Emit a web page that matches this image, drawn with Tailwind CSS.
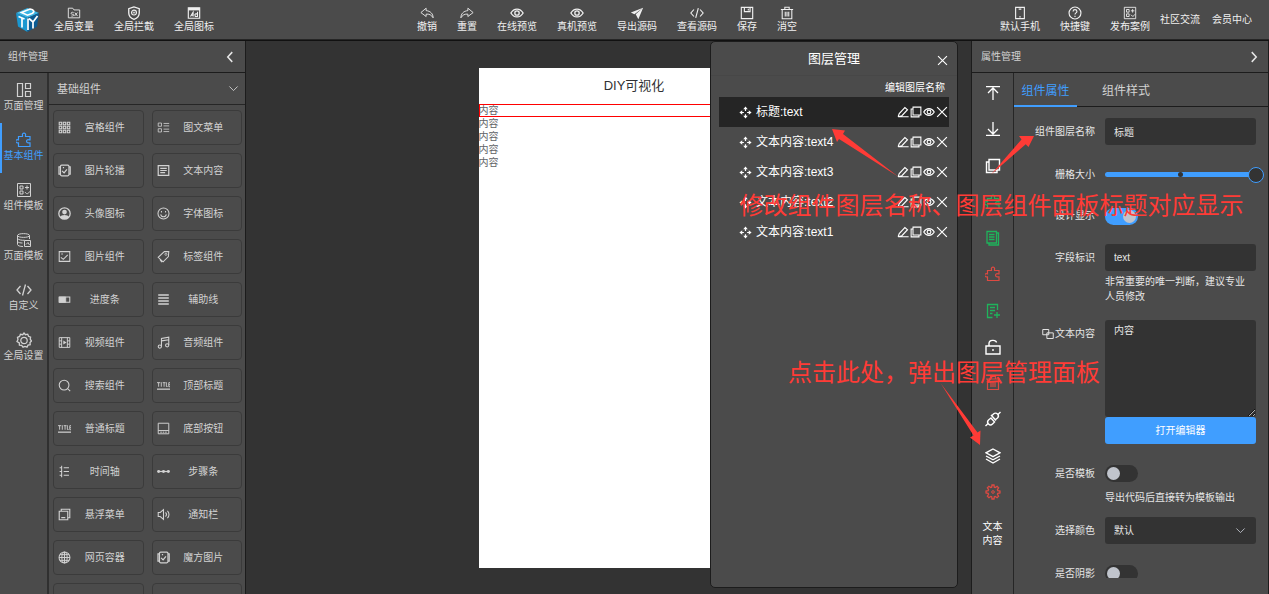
<!DOCTYPE html>
<html lang="zh-CN">
<head>
<meta charset="utf-8">
<meta name="viewport" content="width=device-width, initial-scale=1">
<title>DIY可视化</title>
<script src="https://cdn.jsdelivr.net/npm/@tailwindcss/browser@4"></script>
</head>
<body class="relative flex h-screen flex-col overflow-hidden bg-[#333333] font-['Liberation_Sans','Noto_Sans_CJK_SC',sans-serif] text-[10px] leading-[14px] text-[#e6e6e6] [&_svg]:fill-none [&_svg]:stroke-current">

<!-- icon set -->
<svg class="hidden" aria-hidden="true">
  <symbol id="var" viewBox="0 0 16 16"><path d="M1.500 13.500v-11h5l1.500 2h6.500v9zM7.500 7.500C4 6 4 10 6.500 9.500S8 12 5 11.500M8.500 11.500l3.500-4M9 7.500l3 4"/></symbol>
  <symbol id="shield" viewBox="0 0 16 16"><path d="M8 1 2 3v5c0 3.500 2.500 6 6 7.200 3.500-1.200 6-3.700 6-7.200V3z" stroke-width="1.500"/><circle cx="8" cy="7.500" r="2.800" stroke-width="1.300"/><circle cx="8" cy="7.500" r=".8"/></symbol>
  <symbol id="ad" viewBox="0 0 16 16"><path d="M1.500 2h13v12h-13z" stroke-width="1.300"/><path d="M1.500 3.500h13" stroke-width="3"/><path d="m4 12 3-5v5M5.200 10.500H7M12 6.500V12H9.500L9 10l1-1h1.500" stroke-width="1.200"/></symbol>
  <symbol id="undo" viewBox="0 0 16 16"><path d="M7 2.500 1 7.500l6 4.500V9.300c3.500-.3 6 .7 8 4.200 0-4.500-3-7.800-8-8.200z"/></symbol>
  <symbol id="redo" viewBox="0 0 16 16"><path d="m9 2.500 6 5L9 12V9.300C5.500 9 3 10 1 13.500c0-4.500 3-7.800 8-8.200z"/></symbol>
  <symbol id="eye" viewBox="0 0 16 16"><path d="M1 8c3.500-6 10.500-6 14 0-3.500 6-10.500 6-14 0z" stroke-width="1.500"/><circle cx="8" cy="8" r="2.500" stroke-width="1.500"/></symbol>
  <symbol id="send" viewBox="0 0 16 16"><path d="M15 2 1 7.500l4 2zM15 2 6.500 9.500 9.500 15z" fill="currentColor" stroke="none"/></symbol>
  <symbol id="code" viewBox="0 0 16 16"><path d="M4.500 4 1 8l3.500 4M11.500 4 15 8l-3.500 4M9.500 2.500l-3 11" stroke-width="1.300"/></symbol>
  <symbol id="save" viewBox="0 0 16 16"><path d="M1.500 1.500h13v13h-13zM5 1.500v5h6.500v-5M9.500 3v2" stroke-width="1.300"/></symbol>
  <symbol id="trash" viewBox="0 0 16 16"><path d="M1 4h14M5.500 4V1.500h5V4M2.500 4v10.500h11V4M6 6.500v5.500M8 6.500v5.500M10 6.500v5.500" stroke-width="1.200"/></symbol>
  <symbol id="phone" viewBox="0 0 16 16"><path d="M3 1.500h10v13H3zM6.500 3.500h3M7.200 12.500h1.600" stroke-width="1.300"/></symbol>
  <symbol id="help" viewBox="0 0 16 16"><circle cx="8" cy="8" r="6.800" stroke-width="1.300"/><path d="M5.800 6.300C5.800 3.500 10.200 3.500 10.200 6.300 10.200 8 8 7.800 8 9.800M8 11.200v1.400" stroke-width="1.300"/></symbol>
  <symbol id="tpl" viewBox="0 0 16 16"><path d="M1.500 1.500h13v13h-13zM4 4h3v3H4zM4 9h3v3H4zM11 3.500v4M9 5.500h4M9 10c1.500 2.500 3.500 2 4.500-.5"/></symbol>
  <symbol id="layout" viewBox="0 0 16 16"><path d="M1.500 1.500h5v13h-5zM9.500 1.500h5v5h-5zM9.500 9.500h5v5h-5z" stroke-width="1.200"/></symbol>
  <symbol id="puzzle" viewBox="0 0 16 16"><path d="M2.500 4.500h4V3.200a1.600 1.600 0 1 1 3 0v1.300h4.500v3.300h-1.300a1.600 1.600 0 1 0 0 3H14v3.700H2.500v-3.700H1.800a1.600 1.600 0 1 1 0-3h.7z" stroke-width="1.200"/></symbol>
  <symbol id="db" viewBox="0 0 16 16"><path d="M1.500 3.500c0-2.500 12-2.500 12 0s-12 2.500-12 0v9c0 1.200 2.500 2 5.500 2M1.500 6.500c1 1.500 5 2 7 1.700M1.500 9.500c1 1.200 3 1.500 5 1.500M13.500 3.500V7M8.500 8.500h6v6h-6zM10 12.500l2-2 1.500 2.500"/></symbol>
  <symbol id="gear" viewBox="0 0 16 16"><path d="m8 1 1.500 1.700 2.200-.5.800 2.100 2.100.8-.4 2.100L15.500 9l-1.500 1.500.2 2.200-2.200.4-1 2-2-.7-2 .8-1.300-1.800-2.300-.2-.1-2.300L1 9.500l1-2-.5-2.200 2.100-.9.800-2.100 2.300.4z" stroke-width="1.300"/><circle cx="8" cy="8.500" r="3.200" stroke-width="1.200"/></symbol>
  <symbol id="cog" viewBox="0 0 16 16"><path d="m6.700 3.200.3-2.200h2l.3 2.200 1 .4 1.800-1.300 1.500 1.500L12.400 5.600l.4 1L15 7v2l-2.200.3-.4 1 1.200 1.900-1.500 1.500-1.800-1.300-1 .4L9 15H7l-.3-2.200-1-.4-1.800 1.300-1.500-1.500 1.200-1.900-.4-1L1 9V7l2.200-.4.400-1-1.200-1.800 1.500-1.500 1.800 1.300z" stroke-width="1.300"/><circle cx="8" cy="8" r="1.300"/></symbol>
  <symbol id="grid9" viewBox="0 0 16 16"><path d="M1.500 1.500h3v3h-3zM6.500 1.500h3v3h-3zM11.500 1.500h3v3h-3zM1.500 6.500h3v3h-3zM6.500 6.500h3v3h-3zM11.500 6.500h3v3h-3zM1.500 11.500h3v3h-3zM6.500 11.500h3v3h-3zM11.500 11.500h3v3h-3z" stroke-width="1.300"/></symbol>
  <symbol id="list" viewBox="0 0 16 16"><path d="M1.500 2.500h4v4h-4zM1.500 9.500h4v4h-4zM8 3h7M8 6h7M8 10h7M8 13h7"/></symbol>
  <symbol id="carousel" viewBox="0 0 16 16"><rect x="3" y="1.500" width="10.500" height="13" rx="1.500" stroke-width="1.500"/><path d="M3 3.500H1.200v9H3M13.500 3.500H15v9h-1.500M5 8.500l2.500 2.500L11 6.500M6 4.500h1.500" stroke-width="1.500"/></symbol>
  <symbol id="doc" viewBox="0 0 16 16"><path d="M1.500 2h13v12h-13zM4 5.500h8M4 8h8M4 10.500h6" stroke-width="1.500"/></symbol>
  <symbol id="avatar" viewBox="0 0 16 16"><circle cx="8" cy="8" r="7" stroke-width="1.600"/><circle cx="8" cy="6.300" r="2.900" fill="currentColor" stroke="none"/><path d="M2.500 12.500c1-3.500 10-3.500 11 0-2.500 3-8.500 3-11 0z" fill="currentColor" stroke="none"/></symbol>
  <symbol id="smile" viewBox="0 0 16 16"><circle cx="8" cy="8" r="6.800" stroke-width="1.300"/><path d="M4.500 9c1 4 6 4 7 0M5.500 5v1.800M10.500 5v1.800" stroke-width="1.300"/></symbol>
  <symbol id="image" viewBox="0 0 16 16"><path d="M1.500 2h13v12h-13zM3.500 9l3 2.500 5.500-5.500M4 5h2" stroke-width="1.300"/></symbol>
  <symbol id="tag" viewBox="0 0 16 16"><path d="M9 2h5.500l-.5 6-6.500 6.500L1.500 9zM3.500 11.500 6 15" stroke-width="1.300"/><circle cx="11" cy="5.300" r="1.300"/></symbol>
  <symbol id="progress" viewBox="0 0 16 16"><path d="M1.500 5h13v6.500h-13z" stroke-width="1.300"/><path d="M1.500 5h8v6.500h-8z" fill="currentColor"/></symbol>
  <symbol id="lines" viewBox="0 0 16 16"><path d="M1.500 2.500h13M1.500 6.200h13M1.500 9.800h13M1.500 13.500h13" stroke-width="1.800"/></symbol>
  <symbol id="video" viewBox="0 0 16 16"><path d="M1.500 2h13v12h-13zM4.500 2v12M11.500 2v12M1.500 6h3M1.500 10h3M11.500 6h3M11.500 10h3" stroke-width="1.200"/><path d="m6.500 5.500 4 2.500-4 2.500z" fill="currentColor" stroke="none"/></symbol>
  <symbol id="music" viewBox="0 0 16 16"><path d="M5.500 13V3l9-1.500V11M5.500 6l9-1.500" stroke-width="1.300"/><circle cx="3.500" cy="13" r="2" stroke-width="1.300"/><circle cx="12.500" cy="11.500" r="2" stroke-width="1.300"/></symbol>
  <symbol id="search" viewBox="0 0 16 16"><circle cx="7.500" cy="7.500" r="6" stroke-width="1.300"/><path d="m12 12 3 3" stroke-width="1.300"/></symbol>
  <symbol id="titleic" viewBox="0 0 16 16"><path d="M0 12.500h16" stroke-width="1.500"/><path d="M0 4.500h4M2 4.500v5M5.300 4v5.500M7 4.500h3.500M8.700 4.500v5M11.500 4v5.200h1.500M16 4.500h-1.500v5H16M14.500 7H16" stroke-width="1.100"/></symbol>
  <symbol id="bottom" viewBox="0 0 16 16"><path d="M1.500 1.500h13v13h-13zM1.500 10.500h13M4 12.500h2M7 12.500h2M10 12.500h2" stroke-width="1.200"/></symbol>
  <symbol id="timeline" viewBox="0 0 16 16"><path d="M4.500 1v14M7 3.500h6.500M7 8h6.500M7 12.500h6.500M2 3.500h2.500M2 8h2.500M2 12.500h2.500" stroke-width="1.300"/></symbol>
  <symbol id="steps" viewBox="0 0 16 16"><path d="M1 8h14" stroke-width="1.500"/><g fill="currentColor" stroke="none"><circle cx="2" cy="8" r="1.800"/><circle cx="8" cy="8" r="1.800"/><circle cx="14" cy="8" r="1.800"/></g></symbol>
  <symbol id="float" viewBox="0 0 16 16"><path d="M1.500 4h10.500v10.500H1.500zM4 4V1.500h10.500V12H12M4 11.800h5" stroke-width="1.400"/></symbol>
  <symbol id="sound" viewBox="0 0 16 16"><path d="M1.500 5.500H4l4-3.500v12l-4-3.500H1.500zM10.500 5.500c1.500 1.500 1.500 3.500 0 5M12.800 3.500c2.600 2.500 2.600 6.500 0 9" stroke-width="1.300"/></symbol>
  <symbol id="globe" viewBox="0 0 16 16"><circle cx="8" cy="8" r="6.700" stroke-width="1.300"/><ellipse cx="8" cy="8" rx="3.300" ry="6.700" stroke-width="1.200"/><path d="M1.300 8h13.400M8 1.300v13.400M2.500 4.500h11M2.500 11.500h11" stroke-width="1.200"/></symbol>
  <symbol id="x" viewBox="0 0 16 16"><path d="m1.500 1.500 13 13M14.500 1.500l-13 13" stroke-width="1.600"/></symbol>
  <symbol id="left" viewBox="0 0 16 16"><path d="M11 1.500 5 8l6 6.500" stroke-width="2"/></symbol>
  <symbol id="right" viewBox="0 0 16 16"><path d="m5 1.500 6 6.500-6 6.500" stroke-width="2"/></symbol>
  <symbol id="down" viewBox="0 0 16 16"><path d="m2 5 6 6 6-6" stroke-width="1.300"/></symbol>
  <symbol id="move" viewBox="0 0 16 16"><path d="M8 .5 5.200 4h5.600zM8 15.500 5.200 12h5.600zM.5 8 4 5.200v5.600zM15.500 8 12 5.200v5.600z" fill="currentColor" stroke="none"/><path d="M8 3v3M8 10v3M3 8h3M10 8h3" stroke-width="1.500"/></symbol>
  <symbol id="pen" viewBox="0 0 16 16"><path d="M1.500 14.300 3 10l7.500-8 3.500 3-7.500 8-5 1.300H15.500" stroke-width="1.500"/></symbol>
  <symbol id="copy" viewBox="0 0 16 16"><path d="M4 1.500h10.500V12H4z" stroke-width="1.400"/><path d="M4 4H1.500v10.500H12V12" stroke-width="1.400"/></symbol>
  <symbol id="top" viewBox="0 0 16 16"><path d="M1 1.700h14M8 15V3M3 8l5-5 5 5" stroke-width="1.300"/></symbol>
  <symbol id="bot" viewBox="0 0 16 16"><path d="M1 14.300h14M8 1v12M3 8l5 5 5-5" stroke-width="1.300"/></symbol>
  <symbol id="pages" viewBox="0 0 16 16"><path d="M2 1.500h9.500V13H2zM4 4.500h5.500M4 7h5.500M4 9.500h5.500M11.500 3h2v12H4v-2" stroke-width="1.300"/></symbol>
  <symbol id="addpage" viewBox="0 0 16 16"><path d="M12.500 7V1.500h-10v13h5M5 4.500h5M5 7.500h5M5 10.500h2.500M12 9v6M9 12h6" stroke-width="1.300"/></symbol>
  <symbol id="lock" viewBox="0 0 16 16"><path d="M1 7h14v8H1zM4 7V4.500C4 .500 11 .500 11.500 3.500M8 10v2" stroke-width="1.400"/></symbol>
  <symbol id="link" viewBox="0 0 16 16"><path d="M.5 15 3 12.500M15.500 1 13 3.500M6 7 3.500 9a2.800 2.800 0 0 0 4 4L9 11.500M5.500 6.500l4.500 5M10 9l2.500-2a2.800 2.800 0 0 0-4-4L7 4.500M6 4l5 5.500" stroke-width="1.400"/></symbol>
  <symbol id="layers" viewBox="0 0 16 16"><path d="m8 1 7 3.800-7 3.800-7-3.800zM1 8l7 3.800L15 8M1 11l7 4 7-4" stroke-width="1.400"/></symbol>
  <symbol id="link2" viewBox="0 0 16 16"><path d="M1 2h8v7H1zM6.500 6.500H15v7.500H6.500z" stroke-width="1.300"/></symbol>
</svg>

<!-- top bar -->
<header class="flex h-10 shrink-0 justify-between border-b border-[#262626] bg-[#4b4b4b] pr-[17px] pl-[15px] text-[#f0f0f0] [&_button]:flex [&_button]:flex-col [&_button]:items-center [&_button]:whitespace-nowrap [&_button]:pt-[6px] [&_button_svg]:size-[14px]">
  <div class="flex items-stretch gap-5">
    <a href="#" aria-label="DIY" class="-mr-[6px] flex items-center">
      <svg viewBox="0 0 24 26" class="h-[26px] w-[25px]"><g stroke="none"><path d="M12 1 23.500 6 12 11 .5 6z" fill="#3ab4e4"/><path d="m.5 6 11.500 5v14L2.500 19.500z" fill="#1a97d0"/><path d="M23.500 6 12 11v14l9.500-5.500z" fill="#0b5b93"/></g><g stroke="#fff" stroke-width="1.700"><path d="m6 5.500 8.500-3.500c4 .5 5 3 2 4.500L12 8.200z"/><path d="M3 9.500 9 12M6.500 11v9.500M12.500 11.500v11.500M13.500 11.500l4 3.500L22 9M17.500 15v6.500"/></g></svg>
    </a>
    <button><svg><use href="#var"/></svg>全局变量</button>
    <button><svg><use href="#shield"/></svg>全局拦截</button>
    <button><svg><use href="#ad"/></svg>全局图标</button>
  </div>
  <div class="flex items-stretch gap-5">
    <button><svg><use href="#undo"/></svg>撤销</button>
    <button><svg><use href="#redo"/></svg>重置</button>
    <button><svg><use href="#eye"/></svg>在线预览</button>
    <button><svg><use href="#eye"/></svg>真机预览</button>
    <button><svg><use href="#send"/></svg>导出源码</button>
    <button><svg><use href="#code"/></svg>查看源码</button>
    <button><svg><use href="#save"/></svg>保存</button>
    <button><svg><use href="#trash"/></svg>消空</button>
  </div>
  <div class="flex items-stretch">
    <button class="mr-5"><svg><use href="#phone"/></svg>默认手机</button>
    <button class="mr-5"><svg><use href="#help"/></svg>快捷键</button>
    <button class="mr-[10px]"><svg><use href="#tpl"/></svg>发布案例</button>
    <a href="#" class="mr-3 self-center">社区交流</a>
    <a href="#" class="self-center">会员中心</a>
  </div>
</header>

<div class="flex min-h-0 flex-1 border-t border-[#111111]">
  <!-- component library -->
  <aside class="flex w-[246px] shrink-0 flex-col border-r border-[#1c1c1c] bg-[#4b4b4b] text-[#d2d2d2]">
    <div class="flex h-8 shrink-0 items-center justify-between border-b border-[#1c1c1c] pr-[9px] pl-2">
      <h2>组件管理</h2>
      <button aria-label="收起" class="text-[#e6e6e6]"><svg class="size-[12px]"><use href="#left"/></svg></button>
    </div>
    <div class="flex min-h-0 flex-1">
      <nav class="w-[49px] shrink-0 border-r-2 border-[#303030] [&>button]:flex [&>button]:h-[50px] [&>button]:w-full [&>button]:flex-col [&>button]:items-center [&>button]:gap-px [&>button]:pt-[9px] [&_svg]:size-4">
        <button><svg><use href="#layout"/></svg>页面管理</button>
        <button class="relative text-[#409eff] before:absolute before:inset-y-0 before:left-0 before:w-[2px] before:bg-[#409eff]"><svg><use href="#puzzle"/></svg>基本组件</button>
        <button><svg><use href="#tpl"/></svg>组件模板</button>
        <button><svg><use href="#db"/></svg>页面模板</button>
        <button><svg><use href="#code"/></svg>自定义</button>
        <button><svg><use href="#gear"/></svg>全局设置</button>
      </nav>
      <div class="flex min-w-0 flex-1 flex-col">
        <button class="flex h-8 shrink-0 items-center justify-between border-b border-[#262626] pr-[6px] pl-2 text-[11px]">基础组件<svg class="size-[11px]"><use href="#down"/></svg></button>
        <div class="grid grid-cols-2 gap-2 overflow-hidden pt-[5px] pr-[3px] pl-1 [&_span]:flex-1 [&_svg]:size-[13px] [&>button]:flex [&>button]:h-[35px] [&>button]:items-center [&>button]:rounded-[4px] [&>button]:border [&>button]:border-[#3b3b3b] [&>button]:pr-1 [&>button]:pl-1">
          <button><svg><use href="#grid9"/></svg><span>宫格组件</span></button>
          <button><svg><use href="#list"/></svg><span>图文菜单</span></button>
          <button><svg><use href="#carousel"/></svg><span>图片轮播</span></button>
          <button><svg><use href="#doc"/></svg><span>文本内容</span></button>
          <button><svg><use href="#avatar"/></svg><span>头像图标</span></button>
          <button><svg><use href="#smile"/></svg><span>字体图标</span></button>
          <button><svg><use href="#image"/></svg><span>图片组件</span></button>
          <button><svg><use href="#tag"/></svg><span>标签组件</span></button>
          <button><svg><use href="#progress"/></svg><span>进度条</span></button>
          <button><svg><use href="#lines"/></svg><span>辅助线</span></button>
          <button><svg><use href="#video"/></svg><span>视频组件</span></button>
          <button><svg><use href="#music"/></svg><span>音频组件</span></button>
          <button><svg><use href="#search"/></svg><span>搜索组件</span></button>
          <button><svg><use href="#titleic"/></svg><span>顶部标题</span></button>
          <button><svg><use href="#titleic"/></svg><span>普通标题</span></button>
          <button><svg><use href="#bottom"/></svg><span>底部按钮</span></button>
          <button><svg><use href="#timeline"/></svg><span>时间轴</span></button>
          <button><svg><use href="#steps"/></svg><span>步骤条</span></button>
          <button><svg><use href="#float"/></svg><span>悬浮菜单</span></button>
          <button><svg><use href="#sound"/></svg><span>通知栏</span></button>
          <button><svg><use href="#globe"/></svg><span>网页容器</span></button>
          <button><svg><use href="#carousel"/></svg><span>魔方图片</span></button>
          <button aria-label="更多组件"></button>
          <button aria-label="更多组件"></button>
        </div>
      </div>
    </div>
  </aside>

  <!-- design canvas with the layer panel floating over it -->
  <main class="relative flex min-w-0 flex-1 justify-center pt-[27px] pb-[26px] pl-[51px]">
    <section class="w-[311px] bg-white text-[#606266]">
      <h1 class="flex h-9 items-center justify-center text-[13px] text-[#303133]">DIY可视化</h1>
      <div class="[&>p]:leading-[13px]">
        <p class="outline-1 -outline-offset-1 outline-[#ff0000]">内容</p>
        <p>内容</p>
        <p>内容</p>
        <p>内容</p>
        <p>内容</p>
      </div>
    </section>

    <section class="absolute top-0 right-[13px] bottom-[6px] w-[248px] rounded-[5px] border border-[#1c1c1c] bg-[#4b4b4b] px-2 text-white">
      <div class="relative -mx-2 flex h-[34px] items-center justify-center border-b border-[#474747]">
        <h2 class="text-[13px]">图层管理</h2>
        <button aria-label="关闭" class="absolute right-[9px] bottom-[9px]"><svg class="size-[11px]"><use href="#x"/></svg></button>
      </div>
      <div class="flex h-[21px] items-end justify-end pr-1 pb-[2px]">编辑图层名称</div>
      <ul class="text-[12px] [&_div]:flex [&_div]:gap-px [&_div_svg]:size-[12px] [&>li]:flex [&>li]:h-[30px] [&>li]:items-center [&>li]:pr-px [&>li]:pl-5 [&>li>span]:flex-1">
        <li class="bg-[#252525]"><svg class="mr-1 size-[13px]"><use href="#move"/></svg><span>标题:text</span><div><button aria-label="编辑"><svg><use href="#pen"/></svg></button><button aria-label="复制"><svg><use href="#copy"/></svg></button><button aria-label="显示"><svg><use href="#eye"/></svg></button><button aria-label="删除"><svg><use href="#x"/></svg></button></div></li>
        <li><svg class="mr-1 size-[13px]"><use href="#move"/></svg><span>文本内容:text4</span><div><button aria-label="编辑"><svg><use href="#pen"/></svg></button><button aria-label="复制"><svg><use href="#copy"/></svg></button><button aria-label="显示"><svg><use href="#eye"/></svg></button><button aria-label="删除"><svg><use href="#x"/></svg></button></div></li>
        <li><svg class="mr-1 size-[13px]"><use href="#move"/></svg><span>文本内容:text3</span><div><button aria-label="编辑"><svg><use href="#pen"/></svg></button><button aria-label="复制"><svg><use href="#copy"/></svg></button><button aria-label="显示"><svg><use href="#eye"/></svg></button><button aria-label="删除"><svg><use href="#x"/></svg></button></div></li>
        <li><svg class="mr-1 size-[13px]"><use href="#move"/></svg><span>文本内容:text2</span><div><button aria-label="编辑"><svg><use href="#pen"/></svg></button><button aria-label="复制"><svg><use href="#copy"/></svg></button><button aria-label="显示"><svg><use href="#eye"/></svg></button><button aria-label="删除"><svg><use href="#x"/></svg></button></div></li>
        <li><svg class="mr-1 size-[13px]"><use href="#move"/></svg><span>文本内容:text1</span><div><button aria-label="编辑"><svg><use href="#pen"/></svg></button><button aria-label="复制"><svg><use href="#copy"/></svg></button><button aria-label="显示"><svg><use href="#eye"/></svg></button><button aria-label="删除"><svg><use href="#x"/></svg></button></div></li>
      </ul>
    </section>
  </main>

  <!-- properties -->
  <aside class="flex w-[298px] shrink-0 flex-col border-x border-[#1c1c1c] bg-[#4b4b4b]">
    <div class="flex h-8 shrink-0 items-center justify-between border-b border-[#1c1c1c] pr-2 pl-[9px] text-[#d2d2d2]">
      <h2>属性管理</h2>
      <button aria-label="收起" class="text-[#e6e6e6]"><svg class="size-[12px]"><use href="#right"/></svg></button>
    </div>
    <div class="flex min-h-0 flex-1">
      <div class="flex w-[42px] shrink-0 flex-col items-center border-r border-[#262626] pt-3 text-white [&_svg]:size-4">
        <div class="flex h-[415px] flex-col justify-between">
          <button aria-label="置顶"><svg><use href="#top"/></svg></button>
          <button aria-label="置底"><svg><use href="#bot"/></svg></button>
          <button aria-label="复制"><svg><use href="#copy"/></svg></button>
          <button aria-label="组件" class="text-[#1fb45c]"><svg><use href="#puzzle"/></svg></button>
          <button aria-label="复制页面" class="text-[#1fb45c]"><svg><use href="#pages"/></svg></button>
          <button aria-label="移除组件" class="text-[#dd4a42]"><svg><use href="#puzzle"/></svg></button>
          <button aria-label="新增" class="text-[#1fb45c]"><svg><use href="#addpage"/></svg></button>
          <button aria-label="锁定"><svg><use href="#lock"/></svg></button>
          <button aria-label="删除" class="text-[#dd4a42]"><svg><use href="#trash"/></svg></button>
          <button aria-label="关联"><svg><use href="#link"/></svg></button>
          <button aria-label="图层"><svg><use href="#layers"/></svg></button>
          <button aria-label="设置" class="text-[#dd4a42]"><svg><use href="#cog"/></svg></button>
        </div>
        <p class="mt-5 w-5 leading-[14px]">文本内容</p>
      </div>

      <div class="flex min-w-0 flex-1 flex-col pb-4">
        <div class="flex h-[34px] shrink-0 border-b border-[#1c1c1c] text-[12px]">
          <button class="-mb-px w-[63px] border-b-2 border-[#409eff] pt-1 text-[#409eff]">组件属性</button>
          <button class="ml-[25px] pt-[3px] text-[#d2d2d2]">组件样式</button>
        </div>
        <form class="flex min-h-0 flex-1 flex-col gap-4 overflow-hidden pt-[11px] pr-3 [&>div]:flex [&>div]:shrink-0 [&>div]:gap-[10px] [&>div>div]:min-w-0 [&>div>div]:flex-1 [&>div>label]:flex [&>div>label]:h-[27px] [&>div>label]:w-[81px] [&>div>label]:items-center [&>div>label]:justify-end">
          <div>
            <label for="f-name">组件图层名称</label>
            <div><input id="f-name" type="text" value="标题" class="block h-[27px] w-full rounded-[3px] bg-[#333333] px-[9px] text-[10px]"></div>
          </div>
          <div>
            <label for="f-grid">栅格大小</label>
            <div class="flex h-[27px] items-center">
              <div class="relative flex h-[5px] w-full items-center justify-center rounded-full bg-[#409eff]">
                <span class="size-[5px] rounded-full bg-[#333333]"></span>
                <input id="f-grid" type="range" min="1" max="24" value="24" class="absolute -inset-x-2 appearance-none bg-transparent [&::-webkit-slider-thumb]:size-4 [&::-webkit-slider-thumb]:appearance-none [&::-webkit-slider-thumb]:rounded-full [&::-webkit-slider-thumb]:border [&::-webkit-slider-thumb]:border-[#409eff] [&::-webkit-slider-thumb]:bg-[#333333]">
              </div>
            </div>
          </div>
          <div class="h-6 items-center">
            <label for="f-show">设计显示</label>
            <div><input id="f-show" type="checkbox" checked class="relative block h-[17px] w-[33px] appearance-none rounded-full bg-[#333333] before:absolute before:top-[2px] before:left-[2px] before:size-[13px] before:rounded-full before:bg-[#c0c4cc] checked:bg-[#409eff] checked:before:left-[18px]"></div>
          </div>
          <div>
            <label for="f-key">字段标识</label>
            <div>
              <input id="f-key" type="text" value="text" class="block h-[27px] w-full rounded-[3px] bg-[#333333] px-[9px] text-[10px]">
              <p class="mt-[3px] pr-2 leading-[15px]">非常重要的唯一判断，建议专业人员修改</p>
            </div>
          </div>
          <div>
            <label for="f-text"><svg class="mr-px size-[12px]"><use href="#link2"/></svg>文本内容</label>
            <div>
              <textarea id="f-text" class="block h-[97px] w-full resize-y rounded-[3px] bg-[#333333] px-[9px] py-1 text-[10px]">内容</textarea>
              <button type="button" class="block h-[27px] w-full rounded-[3px] bg-[#409eff] text-white">打开编辑器</button>
            </div>
          </div>
          <div>
            <label for="f-tpl">是否模板</label>
            <div>
              <input id="f-tpl" type="checkbox" class="relative my-[5px] block h-[17px] w-[33px] appearance-none rounded-full bg-[#333333] before:absolute before:top-[2px] before:left-[2px] before:size-[13px] before:rounded-full before:bg-[#c0c4cc] checked:bg-[#409eff] checked:before:left-[18px]">
              <p class="mt-2 -mb-1 leading-[15px]">导出代码后直接转为模板输出</p>
            </div>
          </div>
          <div>
            <label for="f-color">选择颜色</label>
            <div class="relative">
              <select id="f-color" class="block h-[27px] w-full appearance-none rounded-[3px] bg-[#333333] px-[9px] text-[10px]"><option>默认</option></select>
              <svg class="pointer-events-none absolute top-2 right-[10px] size-[11px] text-[#c0c4cc]"><use href="#down"/></svg>
            </div>
          </div>
          <div>
            <label for="f-shadow">是否阴影</label>
            <div><input id="f-shadow" type="checkbox" class="relative my-[5px] block h-[17px] w-[33px] appearance-none rounded-full bg-[#333333] before:absolute before:top-[2px] before:left-[2px] before:size-[13px] before:rounded-full before:bg-[#c0c4cc] checked:bg-[#409eff] checked:before:left-[18px]"></div>
          </div>
        </form>
      </div>
    </div>
  </aside>
</div>

<!-- tutorial callouts -->
<div class="pointer-events-none absolute top-0 right-0 h-[594px] w-[569px] text-[24px] leading-8 whitespace-nowrap text-[#ff3b36]">
  <p class="absolute top-[190px] left-0 w-full pl-[14px] text-center">修改组件图层名称、图层组件面板标题对应显示</p>
  <p class="absolute top-[357px] left-[88px]">点击此处，弹出图层管理面板</p>
  <svg viewBox="700 0 569 594" class="h-full w-full"><g fill="currentColor" stroke="none">
    <path d="m832 129 13 1.500-2 3.500 55 42.500-59-37.500-2 3z"/>
    <path d="m1034 136-5.500 11-2.800-2.800L991 174.500l30.500-35-2.500-3.500z"/>
    <path d="m980 445-10-7.500 3.500-2L940.500 383l37 49.500 3-2z"/>
  </g></svg>
</div>
</body>
</html>
